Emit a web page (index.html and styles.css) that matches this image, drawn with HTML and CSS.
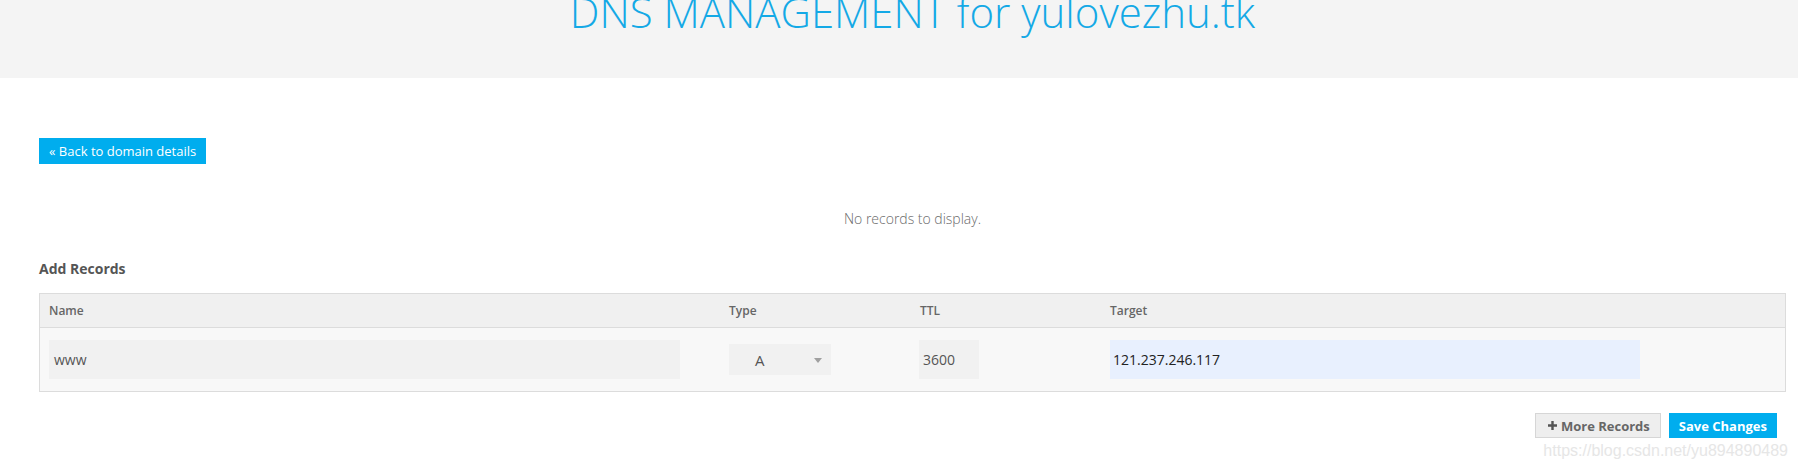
FILE: index.html
```html
<!DOCTYPE html>
<html lang="en">
<head>
<meta charset="utf-8">
<title>DNS Management</title>
<link rel="stylesheet" href="styles.css">
</head>
<body>
<header class="page-header">
  <h1 class="page-title">DNS MANAGEMENT for yulovezhu.tk</h1>
</header>
<main class="content">
  <div class="back-row">
    <a class="btn btn-blue btn-back" href="#">« Back to domain details</a>
  </div>
  <p class="empty-msg">No records to display.</p>
  <h2 class="section-title">Add Records</h2>
  <div class="records">
    <div class="rec-row rec-head">
      <div class="cell">Name</div>
      <div class="cell">Type</div>
      <div class="cell">TTL</div>
      <div class="cell">Target</div>
    </div>
    <div class="rec-row rec-body">
      <div class="cell"><div class="field field-name">www</div></div>
      <div class="cell cell-center"><div class="field field-select"><span class="sel-val">A</span><svg class="caret" width="8" height="5" viewBox="0 0 8 5"><path d="M0 0H8L4 5Z" fill="#a0a0a0"/></svg></div></div>
      <div class="cell"><div class="field field-ttl">3600</div></div>
      <div class="cell"><div class="field field-target">121.237.246.117</div></div>
    </div>
  </div>
  <div class="actions">
    <a class="btn btn-gray" href="#"><svg class="plus" width="9" height="9" viewBox="0 0 9 9"><path d="M3.3 0H5.7V3.3H9V5.7H5.7V9H3.3V5.7H0V3.3H3.3Z" fill="#555"/></svg>More Records</a>
    <a class="btn btn-blue btn-save" href="#">Save Changes</a>
  </div>
</main>
<div class="watermark">https://blog.csdn.net/yu894890489</div>
</body>
</html>
```
FILE: styles.css
```css
html, body {
  margin: 0;
  padding: 0;
  background: #ffffff;
}
body {
  font-family: "Open Sans", "Liberation Sans", sans-serif;
  color: #666;
  position: relative;
  height: 469px;
  overflow: hidden;
}
.page-header {
  background: #f4f4f4;
  height: 78px;
  padding: 0 12px 0 39px;
  box-sizing: border-box;
  overflow: hidden;
}
.page-title {
  margin: -9px 0 0;
  font-size: 42px;
  line-height: 42px;
  font-weight: 300;
  color: #14a9e6;
  text-align: center;
  white-space: nowrap;
}
.content {
  padding: 0 12px 0 39px;
}
.back-row {
  margin-top: 60px;
  display: flex;
}
.btn {
  display: inline-flex;
  align-items: center;
  text-decoration: none;
  box-sizing: border-box;
  font-size: 13px;
  white-space: nowrap;
}
.btn-blue {
  background: #00adee;
  color: #fff;
}
.btn-back {
  height: 26px;
  padding: 0 10px;
  font-weight: 400;
}
.empty-msg {
  margin: 46px 0 0;
  font-size: 14px;
  line-height: 18px;
  font-weight: 300;
  color: #6a6a6a;
  text-align: center;
}
.section-title {
  margin: 31px 0 0;
  font-size: 14px;
  line-height: 20px;
  font-weight: 700;
  color: #555;
}
.records {
  margin-top: 14px;
  border: 1px solid #dcdcdc;
  background: #f8f8f8;
}
.rec-row {
  display: grid;
  grid-template-columns: 680px 191px 190px 1fr;
}
.rec-head {
  background: #f0f0f0;
  border-bottom: 1px solid #dcdcdc;
}
.rec-head .cell {
  padding: 9px 9px 8px;
  font-size: 12px;
  line-height: 16px;
  font-weight: 600;
  color: #666;
}
.rec-body .cell {
  padding: 12px 9px 12px;
  display: flex;
  align-items: center;
}
.field {
  height: 39px;
  box-sizing: border-box;
  background: #f1f1f1;
  font-size: 14px;
  display: flex;
  align-items: center;
  padding: 0 4px;
  color: #555;
}
.field-name {
  width: 631px;
  padding-left: 5px;
}
.field-select {
  width: 102px;
  height: 31px;
  padding-left: 26px;
  position: relative;
  font-size: 15px;
  color: #555;
}
.caret {
  position: absolute;
  left: 85px;
  top: 14px;
}
.field-ttl {
  width: 60px;
  margin-left: -1px;
}
.field-target {
  width: 530px;
  background: #e8f0fe;
  color: #222;
  padding-left: 3px;
}
.actions {
  margin-top: 21px;
  display: flex;
  justify-content: flex-end;
  gap: 8px;
  padding-right: 9px;
}
.actions .btn {
  height: 25px;
  font-weight: 700;
}
.btn-gray {
  background: #eeeeee;
  border: 1px solid #d6d6d6;
  color: #666;
  padding: 0 10px 0 12px;
}
.plus {
  margin-right: 4px;
}
.btn-save {
  padding: 0 10px;
}
.watermark {
  position: absolute;
  right: 10px;
  bottom: 9px;
  font-family: "Liberation Sans", Arial, sans-serif;
  font-size: 16px;
  color: #e6e6e6;
}
```
